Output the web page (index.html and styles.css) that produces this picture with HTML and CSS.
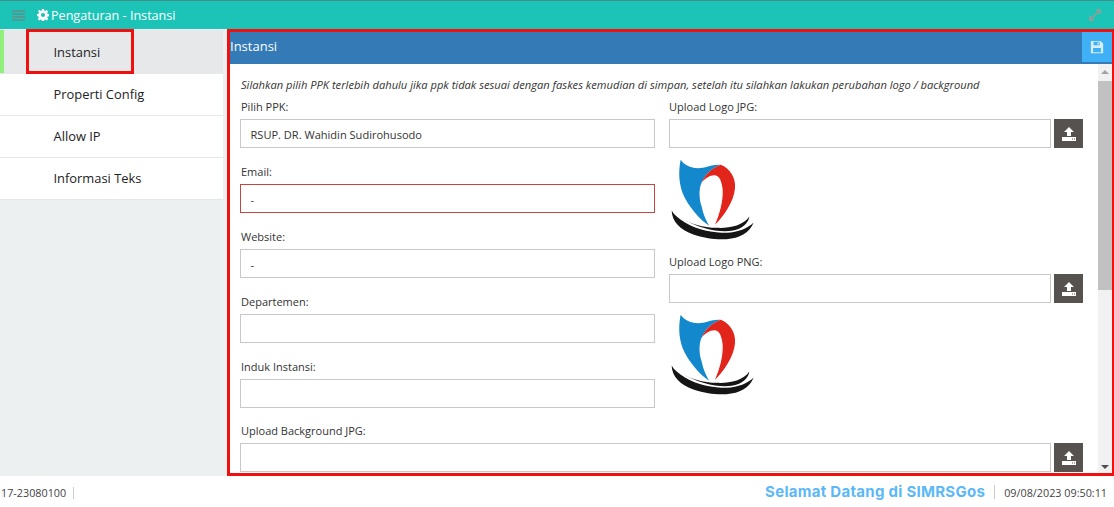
FILE: index.html
```html
<!DOCTYPE html>
<html lang="en">
<head>
    <meta charset="UTF-8">
    <meta name="viewport" content="width=device-width, initial-scale=1.0">
    <title>Pengaturan - Instansi</title>
    <link rel="stylesheet" href="styles.css">
</head>
<body>
    <svg class="defs" width="0" height="0">
        <symbol id="logo" viewBox="30 55 255 245">
            <path fill="#1488cc" d="M62 60 C72 75 90 85 115 85 C135 85 160 72 182 75 C155 85 135 105 125 128 C115 150 118 180 125 200 C130 225 140 245 148 258 C120 240 85 200 68 160 C55 125 56 90 62 60 Z"/>
            <path fill="#e1251b" d="M182 75 C210 85 228 115 225 145 C222 185 190 230 165 255 C178 225 190 185 188 150 C186 125 178 107 165 106 C150 105 135 115 125 128 C135 105 155 85 182 75 Z"/>
            <path fill="#151515" d="M35 212 C36 245 60 270 100 284 C140 297 170 300 200 298 C238 295 268 280 281 248 C262 266 235 277 200 279 C160 279 110 270 75 248 C55 236 42 225 35 212 Z"/>
            <path fill="#151515" d="M60 233 C90 252 130 264 170 264 C205 266 250 258 268 230 C265 252 245 268 215 273 C175 278 120 268 60 233 Z"/>
        </symbol>
        <symbol id="upload" viewBox="0 0 16 16">
            <path fill="#fff" d="M8 1 L13 6 H10 V10 H6 V6 H3 Z"/>
            <path fill="#fff" d="M1 11 H15 V15 H1 Z"/>
            <path fill="#55524f" d="M11 12.5 H12 V13.5 H11 Z M13 12.5 H14 V13.5 H13 Z"/>
        </symbol>
    </svg>

    <div class="topbar">
        <span class="hamburger"><i></i><i></i><i></i><i></i></span>
        <svg class="gear" viewBox="0 0 16 16" width="12" height="12">
            <path fill="#fff" fill-rule="evenodd" d="M6.6 0h2.8l.4 2.2 1.2.5L12.9 1.400l2 2-1.300 1.900.5 1.200 2.200.4v2.800l-2.200.4-.5 1.200 1.300 1.900-2 2-1.900-1.300-1.200.5-.4 2.200H6.600l-.4-2.200-1.200-.5-1.900 1.300-2-2 1.300-1.900-.5-1.200L0 9.400V6.600l2.200-.4.5-1.200L1.400 3.100l2-2L5 2.700l1.200-.5zM8 5.200a2.800 2.800 0 1 0 0 5.600 2.800 2.800 0 0 0 0-5.600z"/>
        </svg>
        <span class="topbar-title">Pengaturan - Instansi</span>
        <svg class="expand" viewBox="0 0 14 14" width="14" height="14">
            <path fill="none" stroke="#a09a94" stroke-width="1.500" d="M2 12 L12 2 M8 2 H12 V6 M2 8 V12 H6"/>
        </svg>
    </div>

    <div class="main">
        <div class="sidebar">
            <div class="menu-item active"><span class="menu-mark"></span><span class="menu-box">Instansi</span></div>
            <div class="menu-item">Properti Config</div>
            <div class="menu-item">Allow IP</div>
            <div class="menu-item">Informasi Teks</div>
        </div>

        <div class="panel">
            <div class="panel-head">
                <span>Instansi</span>
                <button class="save-btn">
                    <svg viewBox="0 0 16 16" width="14" height="14">
                        <path fill="#d8ecfb" fill-rule="evenodd" d="M1 1H12L15 4V15H1zM4 2V6H11V2zM8.500 2.800H10V5.200H8.500zM3.500 9V14H12.500V9z"/>
                    </svg>
                </button>
            </div>
            <div class="panel-body">
                <div class="form">
                    <p class="hint">Silahkan pilih PPK terlebih dahulu jika ppk tidak sesuai dengan faskes kemudian di simpan, setelah itu silahkan lakukan perubahan logo / background</p>
                    <div class="columns">
                        <div class="col-left">
                            <div class="field">
                                <label>Pilih PPK:</label>
                                <div class="input">RSUP. DR. Wahidin Sudirohusodo</div>
                            </div>
                            <div class="field">
                                <label>Email:</label>
                                <div class="input invalid">-</div>
                            </div>
                            <div class="field">
                                <label>Website:</label>
                                <div class="input">-</div>
                            </div>
                            <div class="field">
                                <label>Departemen:</label>
                                <div class="input"></div>
                            </div>
                            <div class="field">
                                <label>Induk Instansi:</label>
                                <div class="input"></div>
                            </div>
                        </div>
                        <div class="col-right">
                            <div class="upload-field">
                                <label>Upload Logo JPG:</label>
                                <div class="upload-row">
                                    <div class="input"></div>
                                    <button class="upload-btn"><svg width="16" height="16"><use href="#upload"/></svg></button>
                                </div>
                                <svg class="logo" width="85" height="82"><use href="#logo"/></svg>
                            </div>
                            <div class="upload-field">
                                <label>Upload Logo PNG:</label>
                                <div class="upload-row">
                                    <div class="input"></div>
                                    <button class="upload-btn"><svg width="16" height="16"><use href="#upload"/></svg></button>
                                </div>
                                <svg class="logo" width="85" height="82"><use href="#logo"/></svg>
                            </div>
                        </div>
                    </div>
                    <div class="field bg-field">
                        <label>Upload Background JPG:</label>
                        <div class="upload-row">
                            <div class="input"></div>
                            <button class="upload-btn"><svg width="16" height="16"><use href="#upload"/></svg></button>
                        </div>
                    </div>
                </div>
                <div class="scrollbar">
                    <span class="arrow-up"></span>
                    <span class="thumb"></span>
                    <span class="arrow-down"></span>
                </div>
            </div>
        </div>
    </div>

    <div class="footer">
        <div class="footer-left">17-23080100</div>
        <div class="footer-right">
            <span class="welcome">Selamat Datang di SIMRSGos</span>
            <span class="clock">09/08/2023 09:50:11</span>
        </div>
    </div>
</body>
</html>
```

FILE: styles.css
```css
* {
    box-sizing: border-box;
}
body {
    font-family: "Open Sans", sans-serif;
    font-size: 11px;
    margin: 0;
    padding: 0;
    height: 507px;
    overflow: hidden;
    background-color: white;
    color: #333;
    display: flex;
    flex-direction: column;
}
.defs {
    display: block;
    height: 0;
}
label {
    display: block;
    line-height: 15px;
}

/* top bar */
.topbar {
    height: 29px;
    flex: none;
    display: flex;
    align-items: center;
    background-color: #1cc4b8;
    border-top: 1px solid #3f8f88;
    padding: 0 12px;
    color: white;
}
.hamburger {
    width: 13px;
    display: flex;
    flex-direction: column;
    gap: 1px;
    margin-right: 12px;
}
.hamburger i {
    display: block;
    height: 2px;
    background-color: #4f9c94;
}
.gear {
    margin-right: 2px;
}
.topbar-title {
    font-size: 12.600px;
    flex: 1;
}

/* sidebar */
.main {
    height: 447px;
    flex: none;
    display: flex;
    background-color: #ecf0f1;
}
.sidebar {
    width: 227px;
    flex: none;
    padding-top: 1px;
}
.menu-item {
    width: 223px;
    height: 42px;
    display: flex;
    align-items: center;
    padding: 0 0 2px 53.500px;
    background-color: white;
    border-bottom: 1px solid #e6e8e8;
    font-size: 12.900px;
    color: #222;
}
.menu-item.active {
    height: 44px;
    padding: 0 0 0 4px;
    background-color: #e7e8ea;
    align-items: stretch;
    border-bottom: none;
    position: relative;
}
.menu-mark {
    position: absolute;
    left: 0;
    top: 0;
    width: 4px;
    height: 43px;
    background-color: #8ff07c;
}
.menu-box {
    margin-left: 22px;
    margin-top: -1px;
    width: 108px;
    height: 45px;
    border: 3px solid #f01010;
    padding-left: 24.500px;
    display: flex;
    align-items: center;
}

/* panel */
.panel {
    width: 887px;
    height: 447px;
    border: 2px solid #f01010;
    border-top-width: 3px;
    border-left-width: 3px;
    border-bottom-width: 3px;
    background-color: white;
    display: flex;
    flex-direction: column;
}
.panel-head {
    height: 32px;
    flex: none;
    display: flex;
    justify-content: space-between;
    background-color: #337ab7;
    color: white;
    font-size: 13px;
    padding-top: 5px;
}
.save-btn {
    width: 30px;
    height: 30px;
    margin-top: -5px;
    border: none;
    padding: 0;
    background-color: #3fb0f5;
    display: flex;
    align-items: center;
    justify-content: center;
}
.panel-body {
    flex: 1;
    min-height: 0;
    display: flex;
    overflow: hidden;
}
.form {
    width: 868px;
    padding-left: 10px;
}
.hint {
    margin: 0;
    padding: 13px 0 0 1px;
    height: 35px;
    line-height: 15px;
    font-style: italic;
    font-size: 11.150px;
    white-space: nowrap;
}
.columns {
    display: flex;
    gap: 14px;
}
.col-left {
    width: 415px;
    flex: none;
}
.col-left label,
.bg-field label {
    padding-left: 1px;
}
.col-right {
    width: 414px;
    flex: none;
}
.field {
    height: 65px;
}
.bg-field {
    width: 843px;
    margin-top: -1px;
}
.input {
    height: 29px;
    margin-top: 5px;
    border: 1px solid #c8c8c8;
    background-color: white;
    padding-left: 9.500px;
    line-height: 29px;
    font-size: 11.050px;
    flex: 1;
    min-width: 0;
}
.input.invalid {
    border-color: #c9443c;
}
.upload-field {
    height: 155px;
}
.upload-row {
    display: flex;
    align-items: flex-end;
    gap: 3px;
}
.upload-btn {
    width: 29px;
    height: 29px;
    flex: none;
    border: none;
    padding: 0;
    background-color: #55524f;
    display: flex;
    align-items: center;
    justify-content: center;
}
.logo {
    display: block;
    margin: 10px 0 0 1px;
}

/* fake scrollbar, thumb sits at the top */
.scrollbar {
    width: 14px;
    display: flex;
    flex-direction: column;
    background-color: #f1f1f1;
    position: relative;
}
.arrow-up {
    height: 17px;
    flex: none;
    position: relative;
}
.arrow-up::after {
    content: "";
    position: absolute;
    left: 3px;
    top: 6px;
    border-left: 4px solid transparent;
    border-right: 4px solid transparent;
    border-bottom: 4px solid #a3a3a3;
}
.thumb {
    height: 209px;
    flex: none;
    background-color: #c1c1c1;
}
.arrow-down {
    position: absolute;
    left: 3px;
    bottom: 4px;
    border-left: 4px solid transparent;
    border-right: 4px solid transparent;
    border-top: 4px solid #505050;
}

/* footer */
.footer {
    flex: 1;
    display: flex;
    justify-content: space-between;
    align-items: center;
    font-size: 10.800px;
    color: #444;
    padding: 0 7px 0 1px;
}
.footer-left {
    width: 73px;
    height: 12px;
    line-height: 12px;
    border-right: 1px solid #ccc;
    margin-top: 2px;
}
.footer-right {
    display: flex;
    align-items: center;
}
.welcome {
    font-family: Inter, sans-serif;
    font-weight: 700;
    font-size: 15px;
    letter-spacing: .28px;
    color: #5cb8f6;
    padding-right: 9px;
    border-right: 1px solid #ccc;
    margin-right: 9px;
    line-height: 14px;
}
.clock {
    margin-top: 2px;
}
```
